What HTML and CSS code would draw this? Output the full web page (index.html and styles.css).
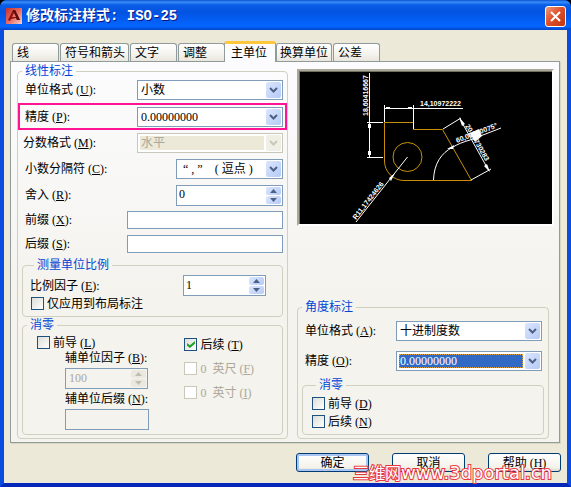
FILE: index.html
```
<!DOCTYPE html>
<html lang="zh-CN">
<head>
    <meta charset="UTF-8">
    <title>修改标注样式: ISO-25</title>
    <link rel="stylesheet" href="styles.css">
</head>
<body>
<svg class="defs" width="0" height="0">
    <symbol id="chevron" viewBox="0 0 9 6"><path d="M1 1 L4.5 4.5 L8 1" fill="none" stroke="currentColor" stroke-width="2"/></symbol>
    <symbol id="up" viewBox="0 0 7 4"><path d="M0 4 L3.5 0 L7 4 Z" fill="currentColor"/></symbol>
    <symbol id="down" viewBox="0 0 7 4"><path d="M0 0 L3.5 4 L7 0 Z" fill="currentColor"/></symbol>
</svg>
<div class="window">
    <header class="titlebar">
        <svg class="logo" width="16" height="16" viewBox="0 0 16 16">
            <defs>
                <linearGradient id="logoBg" x1="0" y1="0" x2="1" y2="1">
                    <stop offset="0" stop-color="#c4302c"/>
                    <stop offset="0.5" stop-color="#e86a60"/>
                    <stop offset="1" stop-color="#f9d2cc"/>
                </linearGradient>
            </defs>
            <rect width="16" height="16" fill="url(#logoBg)"/>
            <path d="M2 12 L7 2 H9 L14 12 H11 L10 10 L5 11 L4 13 Z" fill="#8c1410"/>
            <path d="M7 2 L9 2 L14 12 L11 12 Z" fill="#5c0c0a"/>
            <path d="M6 9 L8 5 L10 9 Z" fill="#e8746a"/>
        </svg>
        <h1>修改标注样式: ISO-25</h1>
        <button type="button" class="close" aria-label="关闭">
            <svg width="11" height="11" viewBox="0 0 11 11"><path d="M1 1 L10 10 M10 1 L1 10" stroke="#fff" stroke-width="2"/></svg>
        </button>
    </header>

    <main class="body">
        <nav class="tabs">
            <button type="button" class="tab w-s">线</button>
            <button type="button" class="tab w-l">符号和箭头</button>
            <button type="button" class="tab w-s">文字</button>
            <button type="button" class="tab w-s">调整</button>
            <button type="button" class="tab active">主单位</button>
            <button type="button" class="tab w-m">换算单位</button>
            <button type="button" class="tab w-s">公差</button>
        </nav>

        <div class="panel">
            <fieldset class="group">
                <legend>线性标注</legend>
                <div class="row">
                    <label for="unit">单位格式 (<u>U</u>):</label>
                    <div class="combo wide">
                        <select id="unit"><option>小数</option></select>
                        <span class="drop"><svg width="9" height="6"><use href="#chevron"/></svg></span>
                    </div>
                </div>
                <div class="row marked">
                    <label for="precision">精度 (<u>P</u>):</label>
                    <div class="combo wide">
                        <select id="precision"><option>0.00000000</option></select>
                        <span class="drop"><svg width="9" height="6"><use href="#chevron"/></svg></span>
                    </div>
                </div>
                <div class="row fraction">
                    <label for="fraction">分数格式 (<u>M</u>):</label>
                    <div class="combo wide off">
                        <select id="fraction" disabled><option>水平</option></select>
                        <span class="drop"><svg width="9" height="6"><use href="#chevron"/></svg></span>
                    </div>
                </div>
                <div class="row">
                    <label for="separator">小数分隔符 (<u>C</u>):</label>
                    <div class="combo mid">
                        <select id="separator"><option>&nbsp;“ , ”&nbsp;&nbsp;&nbsp; ( 逗点 )</option></select>
                        <span class="drop"><svg width="9" height="6"><use href="#chevron"/></svg></span>
                    </div>
                </div>
                <div class="row">
                    <label for="round">舍入 (<u>R</u>):</label>
                    <div class="spin mid">
                        <input type="text" id="round" value="0">
                        <div class="arrows">
                            <button type="button" aria-label="增加"><svg width="7" height="4"><use href="#up"/></svg></button>
                            <button type="button" aria-label="减少"><svg width="7" height="4"><use href="#down"/></svg></button>
                        </div>
                    </div>
                </div>
                <div class="row short">
                    <label for="prefix">前缀 (<u>X</u>):</label>
                    <input type="text" id="prefix" class="text">
                </div>
                <div class="row short">
                    <label for="suffix">后缀 (<u>S</u>):</label>
                    <input type="text" id="suffix" class="text">
                </div>

                <fieldset class="inner scale">
                    <legend>测量单位比例</legend>
                    <div class="scale-row">
                        <label for="factor">比例因子 (<u>E</u>):</label>
                        <div class="spin small">
                            <input type="text" id="factor" value="1">
                            <div class="arrows">
                                <button type="button" aria-label="增加"><svg width="7" height="4"><use href="#up"/></svg></button>
                                <button type="button" aria-label="减少"><svg width="7" height="4"><use href="#down"/></svg></button>
                            </div>
                        </div>
                    </div>
                    <label class="check"><input type="checkbox"><span>仅应用到布局标注</span></label>
                </fieldset>

                <fieldset class="inner zero">
                    <legend>消零</legend>
                    <div class="zero-grid">
                        <div>
                            <label class="check"><input type="checkbox"><span>前导 (<u>L</u>)</span></label>
                            <div class="sub">
                                <label for="subFactor">辅单位因子 (<u>B</u>):</label>
                                <div class="spin small off">
                                    <input type="text" id="subFactor" value="100" disabled>
                                    <div class="arrows">
                                        <button type="button" aria-label="增加" disabled><svg width="7" height="4"><use href="#up"/></svg></button>
                                        <button type="button" aria-label="减少" disabled><svg width="7" height="4"><use href="#down"/></svg></button>
                                    </div>
                                </div>
                                <label for="subSuffix">辅单位后缀 (<u>N</u>):</label>
                                <input type="text" id="subSuffix" class="text" disabled>
                            </div>
                        </div>
                        <div class="trailing">
                            <label class="check"><input type="checkbox" checked><span>后续 (<u>T</u>)</span></label>
                            <label class="check off"><input type="checkbox" disabled><span>0&nbsp; 英尺 (<u>F</u>)</span></label>
                            <label class="check off"><input type="checkbox" disabled><span>0&nbsp; 英寸 (<u>I</u>)</span></label>
                        </div>
                    </div>
                </fieldset>
            </fieldset>

            <div class="side">
                <div class="preview">
                    <svg viewBox="301 72 252 152">
                        <g fill="none" stroke="#c8900a">
                            <path d="M385.5 122.5 H414.5 V129.5 H443.5 L472.5 180.5 H405 A19.5 19.5 0 0 1 385.5 161 Z"/>
                            <circle cx="408.5" cy="157" r="14.5"/>
                        </g>
                        <g fill="none" stroke="#fff">
                            <path d="M370.5 73 V157 M368 122.5 H384 M368 157.5 H384"/>
                            <path d="M385.5 105 V122 M414.5 105 V129 M385.5 108.5 H464"/>
                            <path d="M408.5 157 L357 222"/>
                            <path d="M434.5 180 C435 164 442 153 454 147 C459 144 464 142 471 140 L502 128"/>
                            <path d="M444 129 L462 118 M472 180 L492 169 M461 119 L490 171"/>
                        </g>
                        <g fill="#fff">
                            <path d="M369 124 h3 v4 h-3z M369 151 h3 v4 h-3z M387 107 h4 v2 h-4z M409 107 h4 v2 h-4z"/>
                            <path d="M396 173 L390 178 L392 181 Z M448 149 L455 145 L454 149 Z M460 117 L466 124 L463 126 Z M491 172 L485 166 L488 164 Z"/>
                            <path d="M471 133 L480 129 L483 136 L476 142 Z"/>
                            <text x="421" y="106">14,10972222</text>
                            <text transform="translate(369 116) rotate(-90)">18,60416667</text>
                            <text transform="translate(357 220) rotate(-52)">R11,17424626</text>
                            <text transform="translate(458 143) rotate(-21)">60,00000075°</text>
                            <text transform="translate(466 126) rotate(60)">20,20730283</text>
                        </g>
                    </svg>
                </div>

                <fieldset class="group angle">
                    <legend>角度标注</legend>
                    <div class="row">
                        <label for="angleUnit">单位格式 (<u>A</u>):</label>
                        <div class="combo wide">
                            <select id="angleUnit"><option>十进制度数</option></select>
                            <span class="drop"><svg width="9" height="6"><use href="#chevron"/></svg></span>
                        </div>
                    </div>
                    <div class="row">
                        <label for="anglePrecision">精度 (<u>O</u>):</label>
                        <div class="combo wide selected">
                            <select id="anglePrecision"><option>0.00000000</option></select>
                            <span class="drop"><svg width="9" height="6"><use href="#chevron"/></svg></span>
                        </div>
                    </div>
                    <fieldset class="inner angle-zero">
                        <legend>消零</legend>
                        <label class="check"><input type="checkbox"><span>前导 (<u>D</u>)</span></label>
                        <label class="check"><input type="checkbox"><span>后续 (<u>N</u>)</span></label>
                    </fieldset>
                </fieldset>
            </div>
        </div>

        <footer class="buttons">
            <button type="button" class="default">确定</button>
            <button type="button">取消</button>
            <button type="button">帮助 (<u>H</u>)</button>
            <div class="watermark"><span>三维网</span>www.3dportal.cn</div>
        </footer>
    </main>
</div>
</body>
</html>
```
FILE: styles.css
```
* {
    box-sizing: border-box;
}
body {
    margin: 0;
    background: #000;
    font-family: "Liberation Serif", "Noto Sans CJK SC", serif;
    font-size: 12px;
    line-height: 14px;
    color: #000;
}
button, input, select {
    font: inherit;
    color: inherit;
}
.defs {
    position: absolute;
}
.window {
    display: flex;
    flex-direction: column;
    min-height: 100vh;
    background: #0a4fe0;
    border-radius: 7px 7px 0 0;
    overflow: hidden;
}
.titlebar {
    display: flex;
    align-items: center;
    height: 30px;
    padding: 2px 5px 0 6px;
    background: linear-gradient(#0a52cf 0, #3b8dfb 7%, #0a5ee6 16%, #0353e1 40%, #0361f8 75%, #0466ff 88%, #0043c8 100%);
}
.titlebar h1 {
    flex: 1;
    margin: 0 0 0 4px;
    font: bold 14px/18px "Liberation Mono", "Noto Sans CJK SC", monospace;
    color: #fff;
    text-shadow: 1px 1px #0a1883;
    white-space: nowrap;
}
.close {
    display: flex;
    align-items: center;
    justify-content: center;
    width: 21px;
    height: 21px;
    padding: 0;
    border: 1px solid #fff;
    border-radius: 3px;
    background: linear-gradient(135deg, #ef9a7f, #e0502c 45%, #c13510);
}
.body {
    flex: 1;
    padding: 11px 7px 10px 6px;
    background: #ece9d8;
    border: solid #0a4be0;
    border-width: 0 4px 4px;
    border-bottom-color: #0528b8;
}
/* tabs */
.tabs {
    display: flex;
    align-items: flex-end;
    gap: 1px;
    height: 20px;
    padding-left: 2px;
}
.tab {
    height: 18px;
    padding: 0 0 0 4px;
    border: 1px solid #919b9c;
    border-bottom: 0;
    border-radius: 3px 3px 0 0;
    background: linear-gradient(#fff, #f4f3ee 60%, #e8e6dc);
    text-align: left;
    line-height: 16px;
    white-space: nowrap;
}
.w-s {
    width: 47px;
}
.w-m {
    width: 56px;
    padding-left: 3px;
}
.w-l {
    width: 69px;
}
.tab.active {
    width: 52px;
    height: 21px;
    margin: 0 -1px -1px -2px;
    padding-left: 6px;
    border-top: 3px solid #ffc73c;
    background: #fcfcfe;
    z-index: 1;
}
/* tab page */
.panel {
    display: grid;
    grid-template-columns: 271fr 257fr;
    column-gap: 9px;
    padding: 3px 5px 3px 6px;
    border: 1px solid #919b9c;
    background: linear-gradient(#fcfcfe, #f4f3ee 60%);
    box-shadow: 1px 1px #d8d4c0;
}
fieldset {
    min-width: 0;
    margin: 0;
    padding: 0;
    border: 1px solid #d0d0bf;
    border-radius: 4px;
}
legend {
    height: 12px;
    margin-left: 4px;
    padding: 0 3px;
    line-height: 12px;
    color: #0046d5;
}
.row {
    display: flex;
    align-items: center;
    justify-content: space-between;
    height: 26px;
    padding: 0 4px 0 7px;
    white-space: nowrap;
}
.row.marked {
    height: 27px;
    padding: 0 2px 0 5px;
    border: 2px solid #ff1493;
}
.row.fraction {
    padding-left: 5px;
}
.row.short {
    height: 24px;
}
.row .text {
    width: 156px;
    height: 18px;
}
.text {
    padding: 0 3px;
    border: 1px solid #7f9db9;
    background: #fff;
}
.text:disabled {
    background: transparent;
}
.combo {
    position: relative;
    height: 20px;
    border: 1px solid #7f9db9;
    background: #fff;
}
.wide {
    width: 146px;
}
.mid {
    width: 107px;
}
.small {
    width: 83px;
}
.combo select {
    display: block;
    width: 100%;
    height: 18px;
    padding: 0 18px 0 3px;
    border: 0;
    background: transparent;
    appearance: none;
    outline: 0;
}
.drop {
    position: absolute;
    top: 1px;
    right: 1px;
    bottom: 1px;
    display: flex;
    align-items: center;
    justify-content: center;
    width: 15px;
    border-radius: 2px;
    background: linear-gradient(135deg, #dbe6fd, #b6caf7);
    color: #4d6185;
    pointer-events: none;
}
.combo.off {
    border-color: #c9c7ba;
}
.combo.off select {
    height: 14px;
    margin: 2px 18px 2px 2px;
    width: 124px;
    padding: 0 1px;
    background: #ece9d8;
    color: #aca899;
    opacity: 1;
}
.off .drop {
    background: #f0efe6;
    color: #c9c7ba;
}
.combo.selected select {
    width: 124px;
    height: 14px;
    margin: 2px;
    padding: 0 1px;
    background: #316ac5;
    color: #fff;
    outline: 1px dotted #e0a040;
    outline-offset: -1px;
}
.spin {
    display: flex;
    height: 21px;
    padding: 1px;
    border: 1px solid #7f9db9;
    background: #fff;
}
.spin input {
    flex: 1;
    min-width: 0;
    padding: 0 0 2px 1px;
    border: 0;
    background: transparent;
}
.arrows {
    display: flex;
    flex-direction: column;
    gap: 1px;
    width: 15px;
}
.arrows button {
    display: flex;
    flex: 1;
    align-items: center;
    justify-content: center;
    padding: 0;
    border: 0;
    border-radius: 2px;
    background: linear-gradient(135deg, #dbe6fd, #b6caf7);
    color: #4d6185;
}
.spin.off {
    background: transparent;
    color: #aca899;
}
.spin.off input {
    padding-left: 2px;
    color: #aca899;
}
.spin.off .arrows button {
    background: #ebe9df;
    color: #c0beb0;
}
.check {
    display: flex;
    align-items: center;
    gap: 3px;
    height: 13px;
    white-space: nowrap;
}
.check input {
    flex: none;
    width: 13px;
    height: 13px;
    margin: 0;
    border: 1px solid #1d5180;
    background: linear-gradient(135deg, #dcdcd7, #fff);
    appearance: none;
}
.check input:checked {
    display: grid;
    place-items: center;
}
.check input:checked::before {
    content: "";
    width: 8px;
    height: 7px;
    background: #21a121;
    clip-path: polygon(0 30%, 38% 60%, 100% 0, 100% 40%, 38% 100%, 0 65%);
}
.check.off {
    color: #aca899;
}
.check.off input {
    border-color: #cac8bb;
    background: #fff;
}
.inner {
    margin: 0 4px 3px;
}
.scale {
    margin: 3px 4px 2px;
    padding: 4px 16px 6px 7px;
}
.scale-row {
    display: flex;
    align-items: center;
    justify-content: space-between;
}
.scale .check {
    margin: 1px 0 0 1px;
}
.zero-grid {
    display: grid;
    grid-template-columns: 148fr 98fr;
    padding: 5px 0 4px 14px;
}
.sub {
    display: flex;
    flex-direction: column;
    align-items: flex-start;
    gap: 3px;
    padding: 2px 0 0 28px;
}
.sub .text {
    width: 84px;
    height: 21px;
}
.trailing {
    display: flex;
    flex-direction: column;
    gap: 11px;
    padding-top: 2px;
}
/* right column */
.side {
    display: flex;
    flex-direction: column;
    justify-content: space-between;
}
.preview {
    margin-top: 4px;
    border: 2px solid;
    border-color: #aca899 #fff #fff #aca899;
    background: #000;
}
.preview svg {
    display: block;
    width: 100%;
    border: solid #716f64;
    border-width: 1px 0 0 1px;
}
.preview text {
    font: bold 7px "Liberation Sans", sans-serif;
}
.angle {
    margin-right: 5px;
}
.angle .row {
    height: 30px;
    padding-right: 6px;
}
.angle legend + .row {
    margin-top: 3px;
}
.angle-zero {
    margin-top: 3px;
    padding: 6px 9px;
}
.angle-zero .check + .check {
    margin-top: 5px;
}
/* bottom buttons */
.buttons {
    position: relative;
    display: flex;
    justify-content: flex-end;
    gap: 23px;
    margin: 10px -1px 0 0;
}
.buttons button {
    width: 73px;
    height: 19px;
    padding: 0;
    border: 1px solid #003c74;
    border-radius: 3px;
    background: linear-gradient(#fff, #f3f2ea 80%, #dcd8ca);
    line-height: 16px;
}
.buttons .default {
    box-shadow: inset 0 0 0 2px #a9c5f2;
}
.watermark {
    position: absolute;
    right: 9px;
    bottom: -12px;
    font: 18px/20px "DejaVu Sans", "Noto Sans CJK SC", sans-serif;
    color: #fff;
    -webkit-text-stroke: 2px #e8383c;
    paint-order: stroke fill;
    white-space: nowrap;
    pointer-events: none;
}
.watermark span {
    font-size: 16px;
}
```
